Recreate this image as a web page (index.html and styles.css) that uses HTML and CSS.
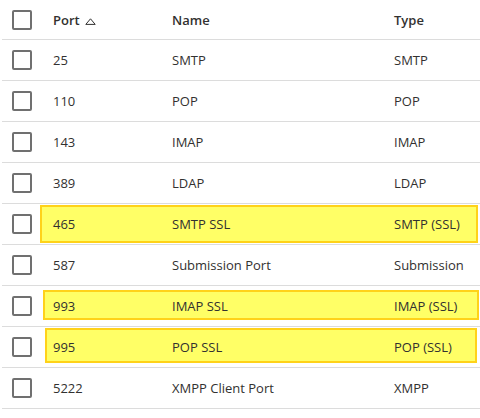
FILE: index.html
```html
<!DOCTYPE html>
<html>
<head>
<meta charset="utf-8">
<link rel="stylesheet" href="styles.css">
</head>
<body>
<div class="table">
  <div class="row header">
    <div class="cell check"><span class="box"></span></div>
    <div class="cell port">Port <svg class="sort" width="11" height="7" viewBox="0 0 11 7"><path d="M5.5 0.8 L10.2 6.4 L0.8 6.4 Z" fill="none" stroke="#323130" stroke-width="1"/></svg></div>
    <div class="cell name">Name</div>
    <div class="cell type">Type</div>
  </div>
  <div class="row"><div class="cell check"><span class="box"></span></div><div class="cell port">25</div><div class="cell name">SMTP</div><div class="cell type">SMTP</div></div>
  <div class="row"><div class="cell check"><span class="box"></span></div><div class="cell port">110</div><div class="cell name">POP</div><div class="cell type">POP</div></div>
  <div class="row"><div class="cell check"><span class="box"></span></div><div class="cell port">143</div><div class="cell name">IMAP</div><div class="cell type">IMAP</div></div>
  <div class="row"><div class="cell check"><span class="box"></span></div><div class="cell port">389</div><div class="cell name">LDAP</div><div class="cell type">LDAP</div></div>
  <div class="row"><span class="hl hl-a"></span><div class="cell check"><span class="box"></span></div><div class="cell port">465</div><div class="cell name">SMTP SSL</div><div class="cell type">SMTP (SSL)</div></div>
  <div class="row"><div class="cell check"><span class="box"></span></div><div class="cell port">587</div><div class="cell name">Submission Port</div><div class="cell type">Submission</div></div>
  <div class="row"><span class="hl hl-b"></span><div class="cell check"><span class="box"></span></div><div class="cell port">993</div><div class="cell name">IMAP SSL</div><div class="cell type">IMAP (SSL)</div></div>
  <div class="row"><span class="hl hl-c"></span><div class="cell check"><span class="box"></span></div><div class="cell port">995</div><div class="cell name">POP SSL</div><div class="cell type">POP (SSL)</div></div>
  <div class="row"><div class="cell check"><span class="box"></span></div><div class="cell port">5222</div><div class="cell name">XMPP Client Port</div><div class="cell type">XMPP</div></div>
</div>
</body>
</html>
```
FILE: styles.css
```css
html, body {
  margin: 0;
  padding: 0;
  background: #ffffff;
}
body {
  font-family: "Open Sans", "Noto Sans", sans-serif;
  font-size: 13px;
  color: #323130;
}
.table {
  margin-left: 2px;
  width: 478px;
}
.row {
  position: relative;
  display: grid;
  grid-template-columns: 51px 119px 222px 1fr;
  height: 40px;
  align-items: center;
  border-bottom: 1px solid #dcdcdc;
}
.row.header {
  height: 39px;
  font-weight: 600;
  color: #323130;
}
.cell {
  position: relative;
  z-index: 1;
  white-space: nowrap;
}
.check {
  padding-left: 10px;
  display: flex;
  align-items: center;
}
.box {
  display: block;
  width: 16px;
  height: 16px;
  border: 2px solid #707070;
  border-radius: 2px;
}
.port {
  display: flex;
  align-items: center;
}
.sort {
  margin-left: 5px;
  margin-top: 3px;
}
.hl {
  position: absolute;
  z-index: 0;
  background: #ffff66;
  border: 2px solid #ffd21a;
  box-sizing: border-box;
}
.hl-a { left: 38px; top: 1px; width: 438px; height: 38px; }
.hl-b { left: 41px; top: 4px; width: 436px; height: 30px; }
.hl-c { left: 43px; top: 1px; width: 432px; height: 35px; }
```
